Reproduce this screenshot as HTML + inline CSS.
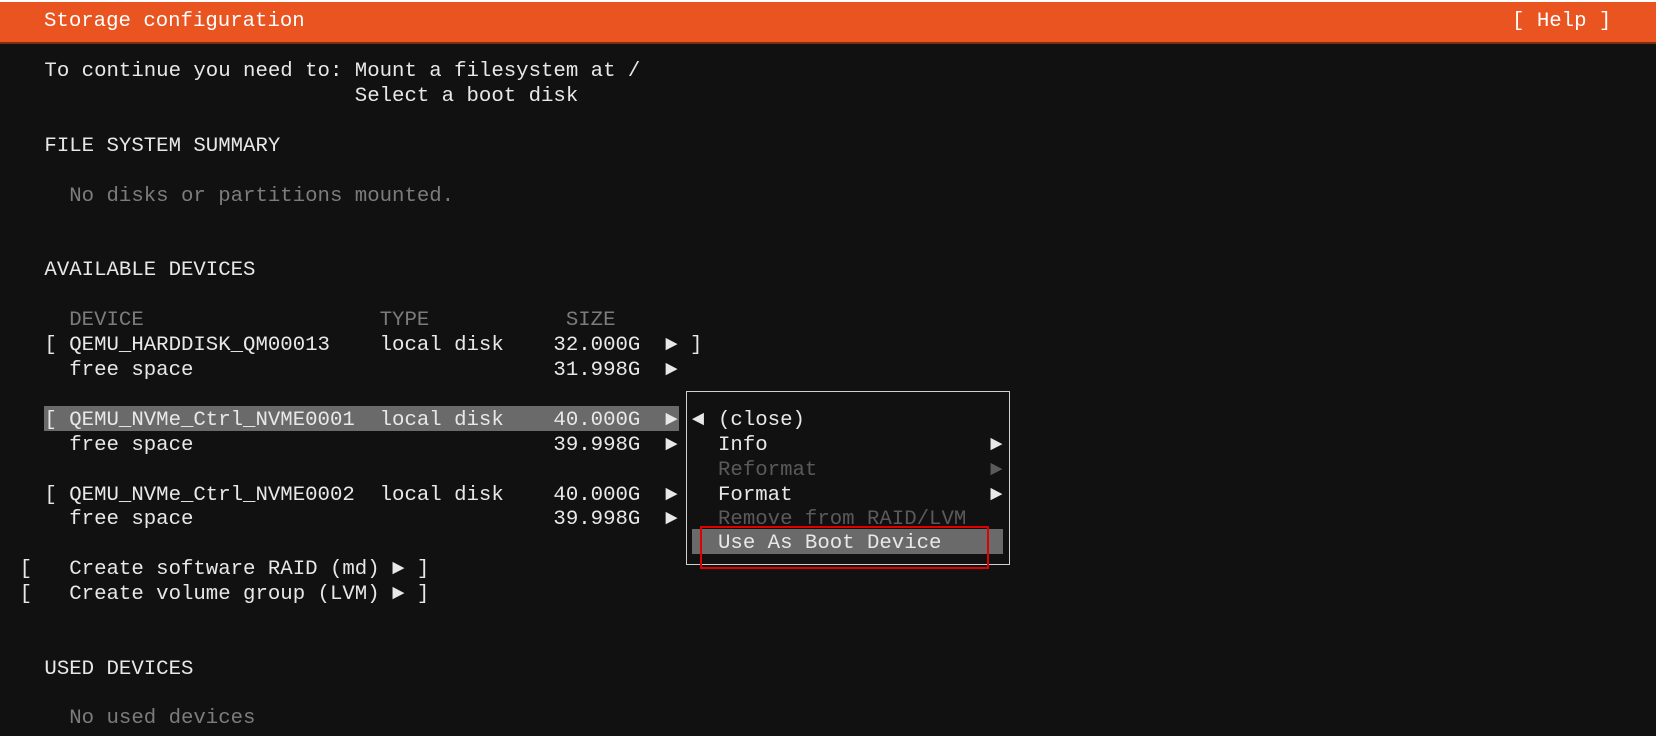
<!DOCTYPE html>
<html><head><meta charset="utf-8"><style>
html,body{margin:0;padding:0;}
body{width:1656px;height:736px;background:#111111;position:relative;overflow:hidden;font-family:"Liberation Mono",monospace;font-size:20.7px;color:#e8e8e8;}
.top{position:absolute;left:0;top:0;width:1656px;height:2px;background:#fff;}
.hdr{position:absolute;left:0;top:2px;width:1656px;height:40px;background:#e95420;border-bottom:2px solid #7a2e12;}
.r{position:absolute;left:19.6px;white-space:pre;line-height:25px;height:25px;}
.g{color:#7c7c7c;}
.d{color:#5a5a5a;}
.hl{position:absolute;background:#6a6a6a;}
.box{position:absolute;left:686px;top:391px;width:322px;height:172px;border:1.5px solid #cfcfcf;}
.red{position:absolute;left:700px;top:526px;width:285px;height:39px;border:2px solid #e00000;}
.m{position:absolute;white-space:pre;line-height:25px;}
</style></head><body>
<div class="top"></div>
<div class="hdr"></div>
<div class="r" style="top:9px;left:44px;color:#fff">Storage configuration</div>
<div class="r" style="top:9px;left:1512px;color:#fff">[ Help ]</div>

<div class="r" style="top:59px">  To continue you need to: Mount a filesystem at /</div>
<div class="r" style="top:84px">                           Select a boot disk</div>
<div class="r" style="top:134px">  FILE SYSTEM SUMMARY</div>
<div class="r g" style="top:184px">    No disks or partitions mounted.</div>
<div class="r" style="top:258px">  AVAILABLE DEVICES</div>
<div class="r g" style="top:308px">    DEVICE                   TYPE           SIZE</div>
<div class="r" style="top:333px">  [ QEMU_HARDDISK_QM00013    local disk    32.000G  ► ]</div>
<div class="r" style="top:358px">    free space                             31.998G  ►</div>
<div class="hl" style="left:44px;top:406px;width:635px;height:25px"></div>
<div class="r" style="top:408px">  [ QEMU_NVMe_Ctrl_NVME0001  local disk    40.000G  ►</div>
<div class="r" style="top:433px">    free space                             39.998G  ►</div>
<div class="r" style="top:483px">  [ QEMU_NVMe_Ctrl_NVME0002  local disk    40.000G  ►</div>
<div class="r" style="top:507px">    free space                             39.998G  ►</div>
<div class="r" style="top:557px">[   Create software RAID (md) ► ]</div>
<div class="r" style="top:582px">[   Create volume group (LVM) ► ]</div>
<div class="r" style="top:657px">  USED DEVICES</div>
<div class="r g" style="top:706px">    No used devices</div>

<div class="box"></div>
<div class="hl" style="left:692px;top:529px;width:311px;height:25px"></div>
<div class="m" style="left:692px;top:408px">◄</div>
<div class="m" style="left:718px;top:408px">(close)</div>
<div class="m" style="left:718px;top:433px">Info</div>
<div class="m" style="left:990px;top:433px">►</div>
<div class="m d" style="left:718px;top:458px">Reformat</div>
<div class="m d" style="left:990px;top:458px">►</div>
<div class="m" style="left:718px;top:483px">Format</div>
<div class="m" style="left:990px;top:483px">►</div>
<div class="m d" style="left:718px;top:507px">Remove from RAID/LVM</div>
<div class="m" style="left:718px;top:531px">Use As Boot Device</div>
<div class="red"></div>
</body></html>
